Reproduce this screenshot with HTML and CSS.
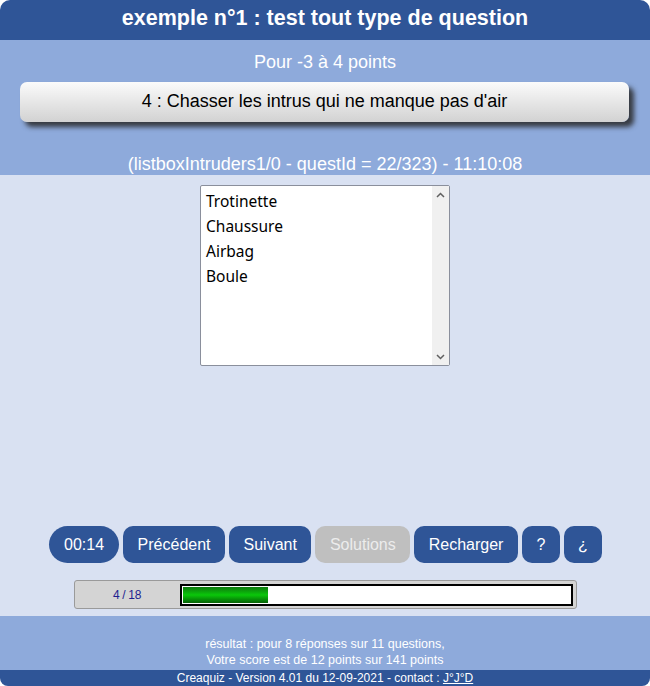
FILE: index.html
```html
<!DOCTYPE html>
<html lang="fr">
<head>
<meta charset="utf-8">
<title>Creaquiz</title>
<link rel="stylesheet" href="styles.css">
</head>
<body>
<div class="page">
  <header class="title-bar">exemple n°1 : test tout type de question</header>
  <section class="question-zone">
    <div class="points">Pour -3 à 4 points</div>
    <div class="question-box">4 : Chasser les intrus qui ne manque pas d'air</div>
    <div class="question-id">(listboxIntruders1/0 - questId = 22/323) - 11:10:08</div>
  </section>
  <main class="body-zone">
    <div class="listbox">
      <ul class="list-items">
        <li>Trotinette</li>
        <li>Chaussure</li>
        <li>Airbag</li>
        <li>Boule</li>
      </ul>
      <div class="scrollbar">
        <svg class="arrow" width="9" height="6" viewBox="0 0 9 6"><path d="M1 5 L4.5 1.5 L8 5" fill="none" stroke="#606060" stroke-width="1.5"/></svg>
        <svg class="arrow" width="9" height="6" viewBox="0 0 9 6"><path d="M1 1 L4.5 4.5 L8 1" fill="none" stroke="#606060" stroke-width="1.5"/></svg>
      </div>
    </div>
    <div class="spacer"></div>
    <nav class="buttons">
      <span class="btn timer">00:14</span>
      <span class="btn">Précédent</span>
      <span class="btn">Suivant</span>
      <span class="btn disabled">Solutions</span>
      <span class="btn">Recharger</span>
      <span class="btn small">?</span>
      <span class="btn small">¿</span>
    </nav>
    <div class="progress">
      <span class="progress-label">4 / 18</span>
      <div class="progress-track"><div class="progress-fill" style="width:22%"></div></div>
    </div>
  </main>
  <section class="result-zone">
    <div>résultat : pour 8 réponses sur 11 questions,</div>
    <div>Votre score est de 12 points sur 141 points</div>
  </section>
  <footer class="footer-bar">Creaquiz - Version 4.01 du 12-09-2021 - contact : <a href="#">J°J°D</a></footer>
</div>
</body>
</html>
```

FILE: styles.css
```css
html, body {
  margin: 0;
  padding: 0;
  background: #ffffff;
}
body {
  font-family: "Liberation Sans", Arial, sans-serif;
}
.page {
  width: 650px;
  height: 686px;
  display: flex;
  flex-direction: column;
}
.title-bar {
  height: 40px;
  background: #2f5597;
  color: #ffffff;
  font-weight: bold;
  font-size: 21.5px;
  line-height: 37px;
  text-align: center;
  border-radius: 10px 10px 0 0;
}
.question-zone {
  height: 135px;
  background: #8eaadb;
  color: #ffffff;
  display: flex;
  flex-direction: column;
  align-items: center;
}
.points {
  font-size: 18px;
  margin-top: 12px;
  line-height: 21px;
}
.question-box {
  box-sizing: border-box;
  width: 609px;
  height: 40px;
  margin: 9px 1px 0 0;
  border-radius: 7px;
  background: linear-gradient(#fbfbfb, #d2d2d2);
  color: #000000;
  font-size: 18px;
  line-height: 38px;
  text-align: center;
  box-shadow: 5px 5px 5px rgba(40, 40, 40, 0.85);
}
.question-id {
  font-size: 18px;
  line-height: 21px;
  margin-top: 32px;
}
.body-zone {
  height: 441px;
  background: #d9e1f2;
  display: flex;
  flex-direction: column;
  align-items: center;
}
.listbox {
  box-sizing: border-box;
  width: 250px;
  height: 181px;
  margin-top: 10px;
  border: 1px solid #8a8f9c;
  border-radius: 2px;
  background: #ffffff;
  display: flex;
}
.list-items {
  list-style: none;
  margin: 0;
  padding: 3px 0 0 5px;
  flex: 1;
  font-family: "Noto Sans", "Open Sans", sans-serif;
  font-size: 15.5px;
  line-height: 25px;
  color: #000000;
}
.scrollbar {
  width: 17px;
  background: #f0f0f0;
  display: flex;
  flex-direction: column;
  justify-content: space-between;
  align-items: center;
  padding: 6px 0 5px;
}
.arrow {
  display: block;
}
.spacer {
  flex: 1;
}
.buttons {
  display: flex;
  gap: 4px;
  margin-left: 1px;
}
.btn {
  box-sizing: border-box;
  height: 37px;
  padding: 0 14.5px;
  border-radius: 10px;
  background: #2f5597;
  color: #ffffff;
  font-size: 16px;
  line-height: 37px;
}
.btn.timer {
  border-radius: 19px;
  padding: 0 15px;
}
.btn.disabled {
  background: #bfbfbf;
  color: #ececec;
}
.btn.small {
  width: 38px;
  padding: 0;
  text-align: center;
}
.progress {
  box-sizing: border-box;
  width: 503px;
  height: 29px;
  margin: 17px 0 7px;
  background: #d4d4d4;
  border: 1px solid #9a9a9a;
  border-radius: 3px;
  display: flex;
  align-items: center;
}
.progress-label {
  width: 105px;
  text-align: center;
  font-size: 12px;
  color: #1f1f8f;
  letter-spacing: -0.3px;
}
.progress-track {
  box-sizing: border-box;
  width: 393px;
  height: 22px;
  border: 2px solid #000000;
  background: #ffffff;
  padding: 1px;
}
.progress-fill {
  height: 100%;
  background: linear-gradient(#0e7a0e, #0ac70a 50%, #066006);
}
.result-zone {
  height: 54px;
  background: #8eaadb;
  color: #ffffff;
  font-size: 12.5px;
  line-height: 16px;
  text-align: center;
  display: flex;
  flex-direction: column;
  justify-content: flex-end;
  padding-bottom: 2px;
  box-sizing: border-box;
}
.footer-bar {
  height: 16px;
  background: #2f5597;
  color: #ffffff;
  font-size: 12px;
  line-height: 16px;
  text-align: center;
  border-radius: 0 0 8px 8px;
}
.footer-bar a {
  color: #ffffff;
}
```
